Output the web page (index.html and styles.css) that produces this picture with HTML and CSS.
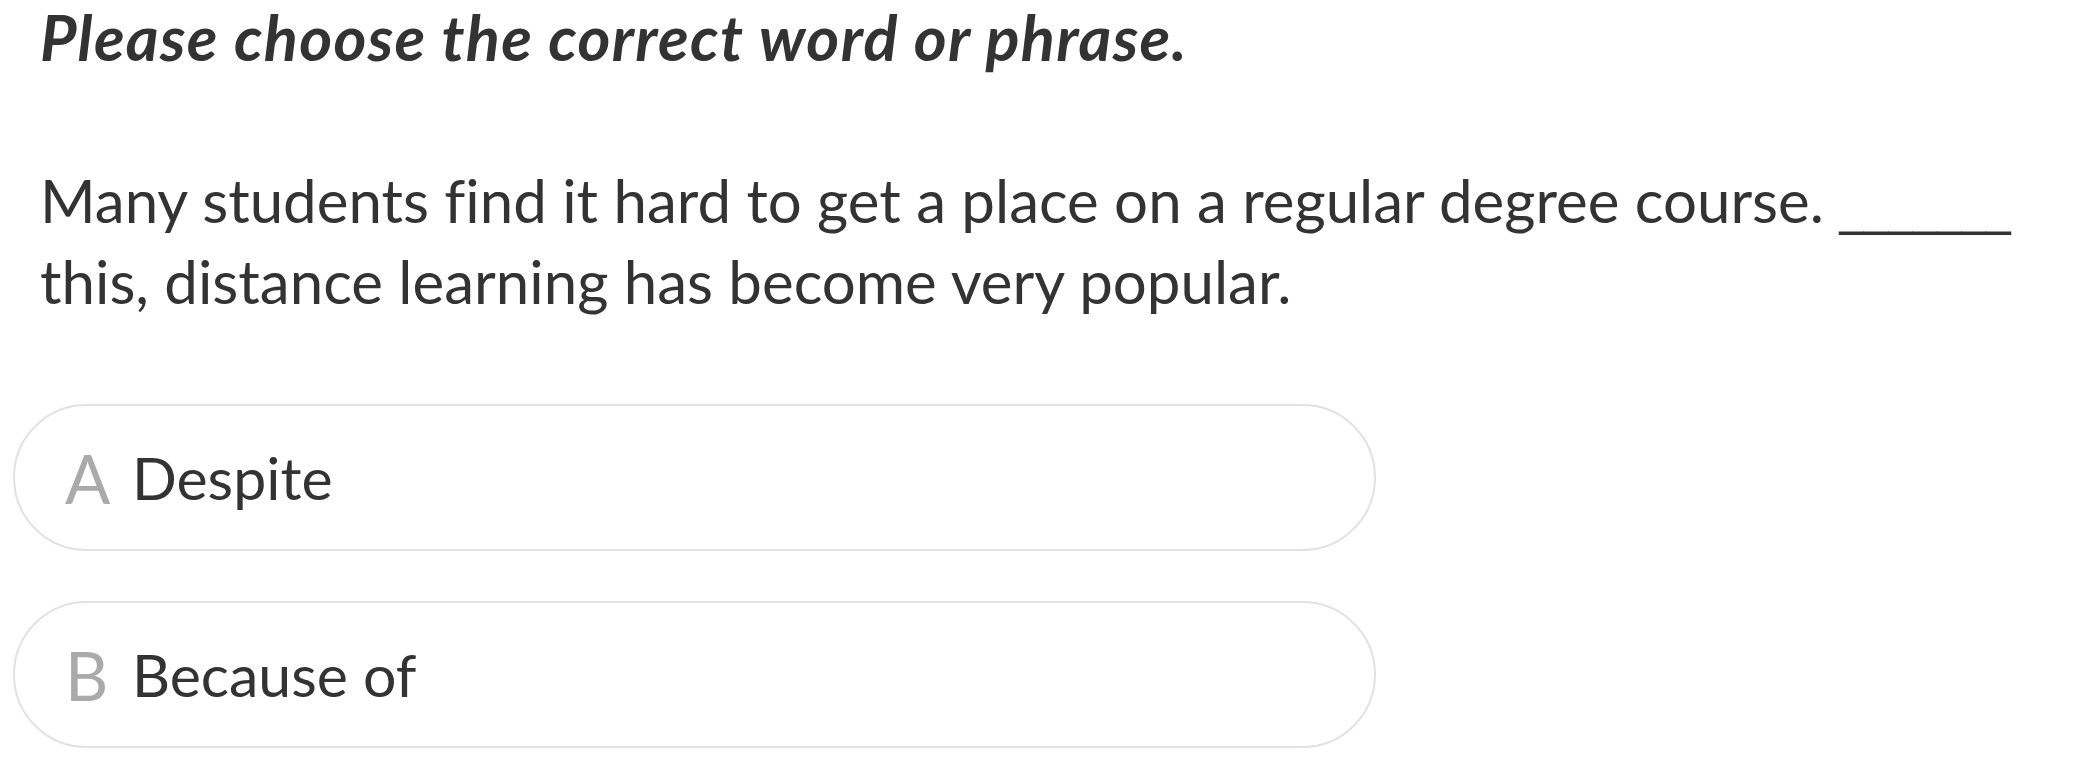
FILE: index.html
```html
<!DOCTYPE html>
<html lang="en">
<head>
<meta charset="utf-8">
<title>Question</title>
<link rel="stylesheet" href="styles.css">
</head>
<body>
<main class="page">
  <h1 class="title">Please choose the correct word or phrase.</h1>
  <p class="stem">Many students find it hard to get a place on a regular degree course. <span class="blank">_______</span> this, distance learning has become very popular.</p>
  <ul class="options">
    <li class="option"><span class="letter">A</span><span class="answer">Despite</span></li>
    <li class="option"><span class="letter">B</span><span class="answer">Because of</span></li>
  </ul>
</main>
</body>
</html>
```
FILE: styles.css
```css
* { box-sizing: border-box; }
html, body { margin: 0; padding: 0; background: #fff; }
body {
  font-family: "Lato", "Open Sans", sans-serif;
  color: #333;
  font-variant-ligatures: none;
}
.page {
  padding: 0 0 0 13px;
  width: 2088px;
}
.title {
  margin: 0 0 0 27px;
  font-size: 63px;
  line-height: 74px;
  font-weight: 700;
  font-style: italic;
  letter-spacing: 1.3px;
}
.stem {
  margin: 86px 0 0 27px;
  font-size: 60px;
  line-height: 81px;
  width: 2040px;
}
.blank {
  font-family: "DejaVu Sans", sans-serif;
  font-size: 49px;
  line-height: 1;
  white-space: nowrap;
}
.options {
  list-style: none;
  margin: 82px 0 0;
  padding: 0;
  display: flex;
  flex-direction: column;
  gap: 50px;
  width: 1363px;
}
.option {
  height: 147px;
  border: 2px solid #e2e2e2;
  border-radius: 74px;
  display: flex;
  align-items: center;
  padding-left: 50px;
}
.letter {
  font-size: 67px;
  color: #aaa;
  width: 67px;
}
.answer {
  font-size: 59px;
  color: #333;
}
```
